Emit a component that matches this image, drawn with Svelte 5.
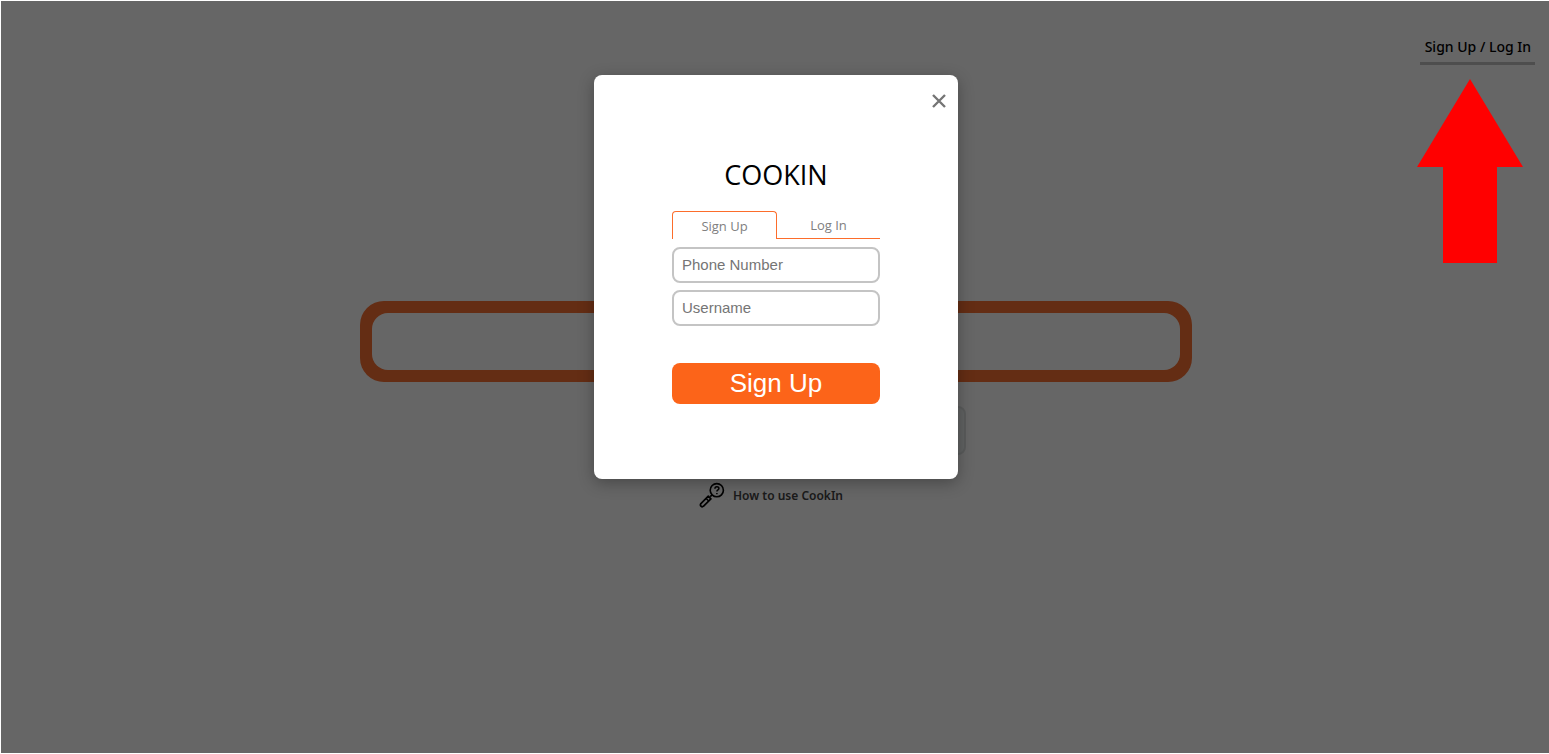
<script>
  let mode = $state('signup');
  let open = $state(true);
</script>

<div class="page">
  <header>
    <button class="account" onclick={() => (open = true)}>Sign Up / Log In</button>
  </header>
  <main>
    <div class="search"><input type="search" aria-label="Search recipes" /></div>
    <button class="find" aria-label="Search"></button>
    <a class="help" href="#help">
      <svg viewBox="0 0 26 26" width="26" height="26" fill="none" stroke="#000" aria-hidden="true">
        <circle cx="17.8" cy="8.2" r="6.6" stroke-width="1.6" />
        <path d="M15.9 6.8c0-2.8 4-2.8 4-.3 0 1.5-2 1.4-2 3.1M17.9 11v1.3" stroke-width="1.5" />
        <path d="M13.1 12.9l-1.9 1.8" stroke-width="1.6" />
        <path d="M9.3 14.2l2.6 2.6-7.3 7.4c-1.9 1.5-4.1-.7-2.7-2.6z" stroke-width="1.7" stroke-linejoin="round" />
        <path d="M7.2 16.4l2.5 2.5" stroke-width="1.4" />
      </svg>
      <span>How to use CookIn</span>
    </a>
  </main>

  {#if open}
    <div class="overlay">
      <div class="dialog" role="dialog" aria-modal="true" aria-labelledby="brand">
        <button class="close" aria-label="Close" onclick={() => (open = false)}>
          <svg viewBox="0 0 14 14" width="14" height="14" aria-hidden="true">
            <path d="M1 1l12 12M13 1L1 13" stroke="#757575" stroke-width="2.4" />
          </svg>
        </button>
        <h1 id="brand">COOKIN</h1>
        <form onsubmit={(e) => e.preventDefault()}>
          <div class="tabs" role="tablist">
            <button type="button" role="tab" aria-selected={mode === 'signup'} class:active={mode === 'signup'} onclick={() => (mode = 'signup')}>Sign Up</button>
            <button type="button" role="tab" aria-selected={mode === 'login'} class:active={mode === 'login'} onclick={() => (mode = 'login')}>Log In</button>
          </div>
          <input type="tel" aria-label="Phone Number" placeholder="Phone Number" />
          <input type="text" aria-label="Username" placeholder="Username" />
          <button class="submit">{mode === 'signup' ? 'Sign Up' : 'Log In'}</button>
        </form>
      </div>
    </div>
  {/if}
  <svg class="arrow" viewBox="0 0 106 184" width="106" height="184" aria-hidden="true">
    <path d="M53 0l53 88H80v96H26V88H0z" fill="#f00" />
  </svg>
</div>

<style>
  :global(body) { background: #fff; }
  .page {
    position: relative;
    box-sizing: border-box;
    min-height: calc(100vh - 2px);
    margin: 1px 0 1px 1px;
    display: flex;
    flex-direction: column;
    font-family: "Open Sans", "Segoe UI", sans-serif;
  }
  .page * { box-sizing: border-box; }
  button { border: 0; background: none; padding: 0; font-family: inherit; cursor: pointer; }
  header { display: flex; justify-content: flex-end; padding: 28px 14px 0; }
  .account {
    height: 36px;
    padding: 2px 4px 0 5px;
    border-bottom: 3px solid #c4c4c4;
    font-family: "Noto Sans", sans-serif;
    font-size: 14px;
    font-weight: 500;
    color: #000;
  }
  main { display: flex; flex-direction: column; align-items: center; padding: 236px 16px 0 18px; }
  .search {
    display: flex;
    width: 100%;
    max-width: 832px;
    height: 81px;
    padding: 12px;
    border-radius: 24px;
    background: #fa7032;
  }
  .search input { width: 100%; border: 0; border-radius: 16px; background: #fff; padding: 0 16px; font-size: 24px; }
  .find {
    width: 100%;
    max-width: 364px;
    height: 49px;
    margin: 24px 0 0 16px;
    border: 2px solid #e0e4e4;
    border-radius: 8px;
    background: #f0f6f5;
  }
  .help {
    display: flex;
    align-items: center;
    gap: 8px;
    margin: 27px 10px 0 0;
    color: #444;
    font-family: "Noto Sans", sans-serif;
    font-size: 12px;
    font-weight: 600;
    text-decoration: none;
  }
  .overlay {
    position: absolute;
    inset: 0;
    display: flex;
    justify-content: center;
    align-items: flex-start;
    padding: 74px 16px 16px 18px;
    background: rgba(0, 0, 0, 0.6);
  }
  .dialog {
    position: relative;
    display: flex;
    flex-direction: column;
    align-items: center;
    width: 100%;
    max-width: 364px;
    padding: 80px 16px 75px;
    border-radius: 8px;
    background: #fff;
    box-shadow: 0 4px 16px rgba(0, 0, 0, 0.3);
  }
  .close { position: absolute; top: 14px; right: 7px; display: grid; place-items: center; width: 24px; height: 24px; }
  h1 { margin: 0 0 16px; font-size: 27px; font-weight: 400; line-height: 40px; }
  form { display: flex; flex-direction: column; width: 100%; max-width: 208px; }
  .tabs { display: flex; margin-bottom: 8px; }
  .tabs button {
    flex: 1;
    height: 28px;
    border-bottom: 1px solid #fc6d2b;
    font-size: 13px;
    color: #808080;
  }
  .tabs button.active {
    border: 1px solid #fc6d2b;
    border-bottom: 0;
    border-radius: 4px 4px 0 0;
  }
  form input {
    width: 100%;
    height: 36px;
    margin-bottom: 7px;
    padding: 0 8px 2px;
    border: 2px solid #c4c4c4;
    border-radius: 8px;
    font: 15px "Liberation Sans", Arial, sans-serif;
  }
  form input::placeholder { color: #757575; }
  .submit {
    height: 41px;
    margin-top: 30px;
    border-radius: 8px;
    background: #fc6419;
    color: #fff;
    font: 26px "Liberation Sans", Arial, sans-serif;
  }
  .arrow { position: absolute; top: 78px; right: 26px; }
</style>
